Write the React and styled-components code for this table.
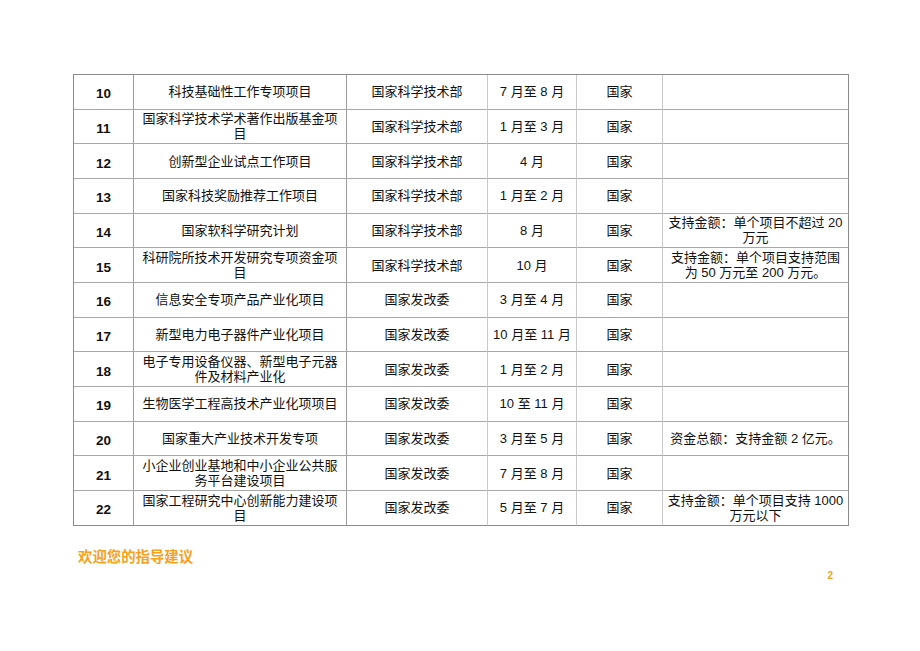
import React from "react";
import styled, { createGlobalStyle } from "styled-components";

const GlobalStyle = createGlobalStyle`
  html, body {
    margin: 0;
    padding: 0;
    background: #ffffff;
  }
  body {
    font-family: "Liberation Sans", "Noto Sans CJK SC", sans-serif;
    color: #111111;
  }
`;

const rows = [
  ["10", "科技基础性工作专项项目", "国家科学技术部", "7 月至 8 月", "国家", ""],
  ["11", "国家科学技术学术著作出版基金项\n目", "国家科学技术部", "1 月至 3 月", "国家", ""],
  ["12", "创新型企业试点工作项目", "国家科学技术部", "4 月", "国家", ""],
  ["13", "国家科技奖励推荐工作项目", "国家科学技术部", "1 月至 2 月", "国家", ""],
  ["14", "国家软科学研究计划", "国家科学技术部", "8 月", "国家", "支持金额：单个项目不超过 20\n万元"],
  ["15", "科研院所技术开发研究专项资金项\n目", "国家科学技术部", "10 月", "国家", "支持金额：单个项目支持范围\n为 50 万元至 200 万元。"],
  ["16", "信息安全专项产品产业化项目", "国家发改委", "3 月至 4 月", "国家", ""],
  ["17", "新型电力电子器件产业化项目", "国家发改委", "10 月至 11 月", "国家", ""],
  ["18", "电子专用设备仪器、新型电子元器\n件及材料产业化", "国家发改委", "1 月至 2 月", "国家", ""],
  ["19", " 生物医学工程高技术产业化项项目", "国家发改委", "10 至 11 月", "国家", ""],
  ["20", "国家重大产业技术开发专项", "国家发改委", "3 月至 5 月", "国家", "资金总额：支持金额 2 亿元。"],
  ["21", "小企业创业基地和中小企业公共服\n务平台建设项目", "国家发改委", "7 月至 8 月", "国家", ""],
  ["22", "国家工程研究中心创新能力建设项\n目", "国家发改委", "5 月至 7 月", "国家", "支持金额：单个项目支持 1000\n万元以下"],
];

const Page = styled.div`
  padding: 74px 0 0 73px;
  width: 776px;
`;

const Grid = styled.div`
  display: grid;
  grid-template-columns: 60px 213px 141px 89px 86px 186px;
  grid-auto-rows: 34.67px;
  border-top: 1px solid #8c8c8c;
  border-left: 1px solid #8c8c8c;
  width: 775px;
`;

const Cell = styled.div`
  display: flex;
  align-items: center;
  justify-content: center;
  text-align: center;
  white-space: pre-line;
  font-size: 13px;
  line-height: 15px;
  padding: 0 2px;
  border-right: 1px solid ${(p) => (p.$edge ? "#8c8c8c" : p.$dark ? "#9c9c9c" : "#c9c9c9")};
  border-bottom: 1px solid ${(p) => (p.$last ? "#8c8c8c" : "#a8a8a8")};
  overflow: hidden;
`;

const Num = styled(Cell)`
  font-weight: bold;
  font-size: 13.5px;
  padding-top: 4px;
`;

const Title = styled.div`
  margin-top: 21px;
  padding-left: 5px;
  font-size: 14.4px;
  font-weight: bold;
  line-height: 18px;
  color: #f5a11c;
  font-family: "Noto Sans CJK SC", sans-serif;
`;

const PageNo = styled.div`
  margin-top: 5px;
  padding-right: 16px;
  text-align: right;
  font-size: 10px;
  font-weight: bold;
  line-height: 12px;
  color: #f5a11c;
`;

export default function App() {
  return (
    <>
      <GlobalStyle />
      <Page>
        <Grid>
          {rows.map((r, i) => {
            const last = i === rows.length - 1;
            return (
              <React.Fragment key={r[0]}>
                <Num $dark $last={last}>{r[0]}</Num>
                <Cell $dark $last={last}>{r[1]}</Cell>
                <Cell $last={last}>{r[2]}</Cell>
                <Cell $last={last}>{r[3]}</Cell>
                <Cell $last={last}>{r[4]}</Cell>
                <Cell $edge $last={last}>{r[5]}</Cell>
              </React.Fragment>
            );
          })}
        </Grid>
        <Title>欢迎您的指导建议</Title>
        <PageNo>2</PageNo>
      </Page>
    </>
  );
}
